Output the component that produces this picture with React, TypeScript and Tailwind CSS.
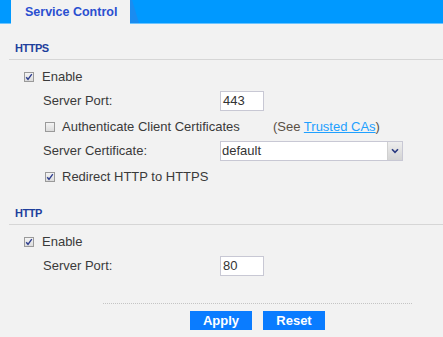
import React from "react";

function Check({ checked }: { checked: boolean }) {
  return (
    <span className="flex h-[10px] w-[10px] items-center justify-center border border-[#9a9a9a] bg-gradient-to-b from-[#f4f4f4] to-[#dcdcdc]">
      {checked && (
        <svg width="8" height="8" viewBox="0 0 8 8">
          <path d="M1.2 4.2 L3 6.3 L6.8 1.2" stroke="#2f3f8f" strokeWidth="1.4" fill="none" />
        </svg>
      )}
    </span>
  );
}

function Header({ title }: { title: string }) {
  return (
    <div className="ml-[9px] box-border flex h-[23px] items-center border-b border-[#d6d6d6] pl-[6px]">
      <span className="text-[11px] font-bold tracking-[-0.5px] text-[#1e3f9c]">{title}</span>
    </div>
  );
}

function Input({ value }: { value: string }) {
  return (
    <div className="box-border flex h-[20px] w-[44px] items-center border border-[#c8c8d4] bg-white pl-[2px] text-[13px] text-[#333]">
      {value}
    </div>
  );
}

export default function App() {
  return (
    <div
      className="h-[337px] w-[443px] overflow-hidden bg-[#f2f2f2] text-[13px] text-[#3a3a3a]"
      style={{ fontFamily: '"Liberation Sans", Arial, sans-serif' }}
    >
      <div className="box-border flex h-[24px] border-b border-[#6cc4ff] bg-[#0099ff]">
        <div className="ml-[11px] flex h-[24px] w-[119px] items-center bg-[#f2f2f2] pl-[14px]">
          <span className="text-[12.5px] font-bold text-[#2a4fd0]">Service Control</span>
        </div>
        <svg width="10" height="23" viewBox="0 0 10 23" className="block">
          <polygon points="0,0 2,0 9,23 0,23" fill="#1a8cf0" />
        </svg>
      </div>

      <div className="mt-[13px]">
        <Header title="HTTPS" />
        <div className="mt-[5px] flex h-[24px] items-center pl-[24px]">
          <Check checked />
          <span className="ml-[8px]">Enable</span>
        </div>
        <div className="flex h-[24px] items-center pl-[43px]">
          <span className="w-[177px]">Server Port:</span>
          <Input value="443" />
        </div>
        <div className="mt-[2px] flex h-[24px] items-center pl-[45px]">
          <Check checked={false} />
          <span className="ml-[7px] w-[211px]">Authenticate Client Certificates</span>
          <span className="text-[#5a5045]">
            (See <span className="text-[#1ea0ff] underline">Trusted CAs</span>)
          </span>
        </div>
        <div className="mt-[2px] flex h-[20px] items-center pl-[43px]">
          <span className="w-[177px]">Server Certificate:</span>
          <div className="box-border flex h-[20px] w-[183px] items-stretch border border-[#c8c8d4] bg-white">
            <span className="flex flex-1 items-center pl-[1px] text-[#333]">default</span>
            <span className="flex w-[15px] items-center justify-center border-l border-[#d0d0d0] bg-gradient-to-b from-[#eeeeee] to-[#d4d4d4]">
              <svg width="8" height="6" viewBox="0 0 8 6">
                <path d="M1 1.2 L4 4.4 L7 1.2" stroke="#2a3a80" strokeWidth="1.6" fill="none" />
              </svg>
            </span>
          </div>
        </div>
        <div className="mt-[4px] flex h-[24px] items-center pl-[45px]">
          <Check checked />
          <span className="ml-[7px]">Redirect HTTP to HTTPS</span>
        </div>
      </div>

      <div className="mt-[13px]">
        <Header title="HTTP" />
        <div className="mt-[5px] flex h-[24px] items-center pl-[24px]">
          <Check checked />
          <span className="ml-[8px]">Enable</span>
        </div>
        <div className="flex h-[24px] items-center pl-[43px]">
          <span className="w-[177px]">Server Port:</span>
          <Input value="80" />
        </div>
      </div>

      <div className="ml-[103px] mt-[25px] w-[309px] border-t border-dotted border-[#c4c4c4]" />
      <div className="ml-[103px] mt-[7px] flex w-[309px] justify-center gap-[11px]">
        <button className="h-[19px] w-[62px] bg-[#0a7cff] text-[13px] font-bold text-white">Apply</button>
        <button className="h-[19px] w-[62px] bg-[#0a7cff] text-[13px] font-bold text-white">Reset</button>
      </div>
    </div>
  );
}
